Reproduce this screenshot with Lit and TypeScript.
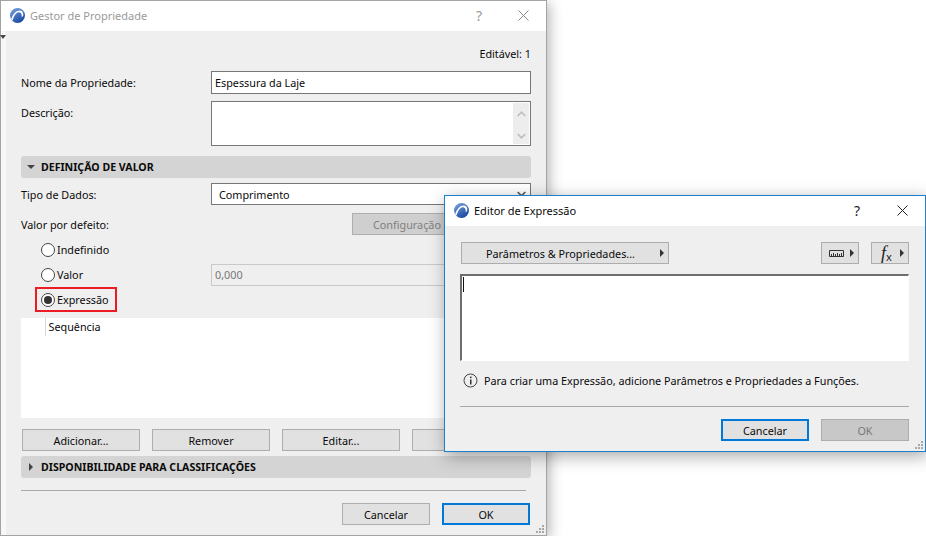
import { LitElement, html, css, svg } from "lit";
import { customElement } from "lit/decorators.js";

const logo = svg`<svg class="logo" width="15" height="15" viewBox="0 0 16 16">
  <defs><linearGradient id="lg" x1="0" y1="0" x2="0.6" y2="1"><stop offset="0" stop-color="#7fa6de"/><stop offset="1" stop-color="#1b4aa4"/></linearGradient></defs>
  <circle cx="8" cy="8" r="8" fill="url(#lg)"/>
  <path d="M1.2 12C3 6 7 2.3 11 2.6c2.4.2 3.3 2.4 3.2 5.4l-1.7 2C12.7 7 12 5 10.4 4.7 7.6 4.2 4.6 7 2.8 13.2z" fill="#fff"/>
</svg>`;

const Radio = (on: boolean) => html`<span class="radio">${on ? html`<span class="dot"></span>` : ""}</span>`;

@customElement("app-root")
export class AppRoot extends LitElement {
  static styles = css`
    :host { display: block; position: relative; width: 926px; height: 536px; overflow: hidden; background: #fff;
      font-family: "Noto Sans", sans-serif; font-size: 10.8px; color: #0a0a0a; }
    * { box-sizing: border-box; }
    .win { position: absolute; display: flex; flex-direction: column; background: #efefef; }
    .main { left: 0; top: 0; width: 547px; height: 536px; border: 1px solid #a3a3a3; box-shadow: 3px 3px 12px rgba(0,0,0,.28); }
    .editor { left: 444px; top: 195px; width: 482px; height: 257px; border: 1px solid #1a7fcf; box-shadow: 2px 4px 16px rgba(0,0,0,.35); }
    .title { height: 30px; flex: none; background: #fff; display: flex; align-items: center; padding: 0 0 2px 9px; gap: 5px; font-size: 11px; }
    .logo { margin-top: 1px; flex: none; }
    .main .title { color: #9a9a9a; }
    .t-name { flex: 1; }
    .help { width: 14px; text-align: center; font-size: 14px; }
    .x { margin: 0 17px 0 21px; display: block; }
    .main .help { color: #9a9a9a; margin-right: 6px; }
    .editor .help { margin-right: 7px; color: #222; }
    .body { position: relative; flex: 1; display: flex; flex-direction: column; min-height: 0; }
    .main .body { padding: 0 15px 0 20px; }
    .strip { position: absolute; left: 0; top: 0; bottom: 0; width: 5px; background: #f7f7f7; }
    .strip-arrow { position: absolute; left: 0; top: 4px; border: 3px solid transparent; border-top: 4px solid #444; border-bottom: 0; margin-left: -1px; }
    .editable { text-align: right; height: 15px; margin-top: 15px; line-height: 15px; }
    .row { display: grid; grid-template-columns: 190px 320px; align-items: center; }
    .r1 { margin-top: 10px; height: 23px; }
    .r2 { margin-top: 7px; height: 45px; align-items: start; }
    .r2 .lab { margin-top: 4px; }
    .field { background: #fff; border: 1px solid #777; height: 100%; display: flex; align-items: center; padding-left: 3px; position: relative; }
    .scroll { position: absolute; right: 1px; top: 1px; bottom: 1px; width: 16px; background: #ededed; display: flex; flex-direction: column; justify-content: space-between; align-items: center; padding: 8px 0 5px; }
    .sel-chev { position: absolute; right: 4px; top: 7px; line-height: 0; }
    .sec { height: 22px; width: 510px; background: #d4d4d4; border-radius: 3px; display: flex; align-items: center; font-weight: 700; font-size: 10.6px; padding-left: 7px; gap: 6px; flex: none; }
    .s1 { margin-top: 10px; }
    .tri-d { width: 0; height: 0; border: 4px solid transparent; border-top: 4px solid #444; border-bottom: 0; margin-left: -1px; }
    .tri-r { width: 0; height: 0; border: 4px solid transparent; border-left: 4px solid #444; border-right: 0; margin-left: 1px; margin-right: 2px; }
    .r3 { margin-top: 5px; height: 22px; }
    .r3 .field { padding-left: 7px; }
    .r4 { margin-top: 8px; height: 22px; display: flex; align-items: center; justify-content: space-between; }
    .btn { background: #e1e1e1; border: 1px solid #adadad; display: flex; align-items: center; justify-content: center; height: 22px; flex: none; }
    .conf { width: 179px; background: #cfcfcf; color: #808080; justify-content: flex-start; padding-left: 20px; }
    .opt { display: flex; align-items: center; gap: 2px; padding-left: 20px; height: 25px; position: relative; }
    .radio { width: 14px; height: 14px; border-radius: 50%; border: 1px solid #444; background: #fff; display: flex; align-items: center; justify-content: center; flex: none; }
    .dot { width: 8px; height: 8px; border-radius: 50%; background: #333; }
    .first { margin-top: 2px; }
    .val { position: absolute; left: 190px; top: 2px; width: 320px; height: 22px; background: #efefef; border: 1px solid #c9c9c9; color: #777; padding-left: 3px; line-height: 20px; }
    .hl { position: absolute; left: 14px; top: 0; width: 82px; height: 25px; border: 2px solid #ed1c24; pointer-events: none; }
    .list { margin-top: 6px; height: 100px; width: 510px; background: #fff; flex: none; padding-left: 24px; }
    .list-c { border-left: 1px solid #d8d8d8; height: 18px; padding-left: 2.5px; line-height: 18px; }
    .btns { display: flex; gap: 12px; margin: 11px 0 0 1px; }
    .btns .btn { width: 118px; }
    .s2 { margin-top: 5px; }
    .hr { height: 1px; background: #a8a8a8; flex: none; }
    .main .hr { width: 505px; margin-top: 12px; }
    .foot { display: flex; justify-content: flex-end; gap: 12px; }
    .main .foot { margin-top: 12px; width: 509px; }
    .foot .btn { width: 88px; }
    .pri { border: 2px solid #0078d7; }
    .off { background: #c8c8c8; color: #777; }
    .grip { position: absolute; right: 1px; bottom: 1px; display: block; }
    .editor .body { padding: 16px 16px 0 15px; }
    .tools { display: flex; align-items: center; padding-left: 1px; gap: 12px; }
    .param { width: 208px; position: relative; padding-right: 9px; }
    .tool { width: 38px; position: relative; padding-right: 7px; }
    .tools .sp { flex: 1; }
    .arr { position: absolute; right: 4px; top: 6px; border: 4px solid transparent; border-left: 4px solid #333; border-right: 0; }
    .area { margin-top: 10px; height: 87px; background: #fff; border: 1px solid #fff; border-top: 2px solid #6d6d6d; border-left: 2px solid #6d6d6d; position: relative; flex: none; }
    .caret { position: absolute; left: 1px; top: 1px; width: 1px; height: 15px; background: #111; }
    .info { display: flex; align-items: center; gap: 6px; margin: 11px 0 0 3px; height: 17px; }
    .editor .hr { margin-top: 17px; }
    .editor .foot { margin-top: 12px; }
    .fx { font-family: "Liberation Serif", serif; font-style: italic; font-size: 18px; line-height: 18px; color: #222; }
    .fx sub { font-family: "Noto Sans", sans-serif; font-style: normal; font-size: 11px; vertical-align: -2px; line-height: 0; }
  `;

  private x(c: string) {
    return svg`<svg class="x" width="11" height="11" viewBox="0 0 11 11"><path d="M.5.5l10 10M10.5.5l-10 10" stroke="${c}" fill="none"/></svg>`;
  }
  private chev(up: boolean, c = "#bdbdbd") {
    return svg`<svg width="9" height="6" viewBox="0 0 9 6"><path d="${up ? "M.7 5L4.5 1.2 8.3 5" : "M.7 1L4.5 4.8 8.3 1"}" fill="none" stroke="${c}" stroke-width="1.6"/></svg>`;
  }
  private grip() {
    return svg`<svg class="grip" width="9" height="9" viewBox="0 0 9 9" fill="#a8a8a8"><rect x="6" y="0" width="2" height="2"/><rect x="3" y="3" width="2" height="2"/><rect x="6" y="3" width="2" height="2"/><rect x="0" y="6" width="2" height="2"/><rect x="3" y="6" width="2" height="2"/><rect x="6" y="6" width="2" height="2"/></svg>`;
  }

  render() {
    return html`
      <div class="win main">
        <div class="title">${logo}<span class="t-name">Gestor de Propriedade</span><span class="help">?</span>${this.x("#8a8a8a")}</div>
        <div class="body">
          <div class="strip"><div class="strip-arrow"></div></div>
          <div class="editable">Editável: 1</div>
          <div class="row r1"><span class="lab">Nome da Propriedade:</span><div class="field">Espessura da Laje</div></div>
          <div class="row r2"><span class="lab">Descrição:</span><div class="field"><div class="scroll">${this.chev(true)}${this.chev(false)}</div></div></div>
          <div class="sec s1"><span class="tri-d"></span>DEFINIÇÃO DE VALOR</div>
          <div class="row r3"><span class="lab">Tipo de Dados:</span><div class="field">Comprimento<span class="sel-chev">${this.chev(false, "#555")}</span></div></div>
          <div class="r4"><span>Valor por defeito:</span><div class="btn conf">Configuração</div></div>
          <div class="opt first">${Radio(false)}Indefinido</div>
          <div class="opt">${Radio(false)}Valor<div class="val">0,000</div></div>
          <div class="opt">${Radio(true)}Expressão<div class="hl"></div></div>
          <div class="list"><div class="list-c">Sequência</div></div>
          <div class="btns"><div class="btn">Adicionar...</div><div class="btn">Remover</div><div class="btn">Editar...</div><div class="btn"></div></div>
          <div class="sec s2"><span class="tri-r"></span>DISPONIBILIDADE PARA CLASSIFICAÇÕES</div>
          <div class="hr"></div>
          <div class="foot"><div class="btn">Cancelar</div><div class="btn pri">OK</div></div>
          ${this.grip()}
        </div>
      </div>
      <div class="win editor">
        <div class="title">${logo}<span class="t-name">Editor de Expressão</span><span class="help">?</span>${this.x("#222")}</div>
        <div class="body">
          <div class="tools">
            <div class="btn param">Parâmetros &amp; Propriedades...<span class="arr"></span></div>
            <span class="sp"></span>
            <div class="btn tool">
              <svg width="15" height="7" viewBox="0 0 15 7"><path d="M.5.5h14v6H.5z" fill="none" stroke="#333"/><path d="M2.5 4v2M4.5 3v3M6.5 4v2M8.5 3v3M10.5 4v2M12.5 3v3" stroke="#333"/></svg>
              <span class="arr"></span></div>
            <div class="btn tool"><span class="fx">f<sub>x</sub></span><span class="arr"></span></div>
          </div>
          <div class="area"><div class="caret"></div></div>
          <div class="info">
            <svg width="15" height="15" viewBox="0 0 15 15"><circle cx="7.5" cy="7.5" r="6.5" fill="none" stroke="#444"/><rect x="7" y="6.5" width="1.5" height="5" fill="#333"/><rect x="7" y="3.6" width="1.5" height="1.6" fill="#333"/></svg>
            <span>Para criar uma Expressão, adicione Parâmetros e Propriedades a Funções.</span>
          </div>
          <div class="hr"></div>
          <div class="foot"><div class="btn pri">Cancelar</div><div class="btn off">OK</div></div>
          ${this.grip()}
        </div>
      </div>
    `;
  }
}
